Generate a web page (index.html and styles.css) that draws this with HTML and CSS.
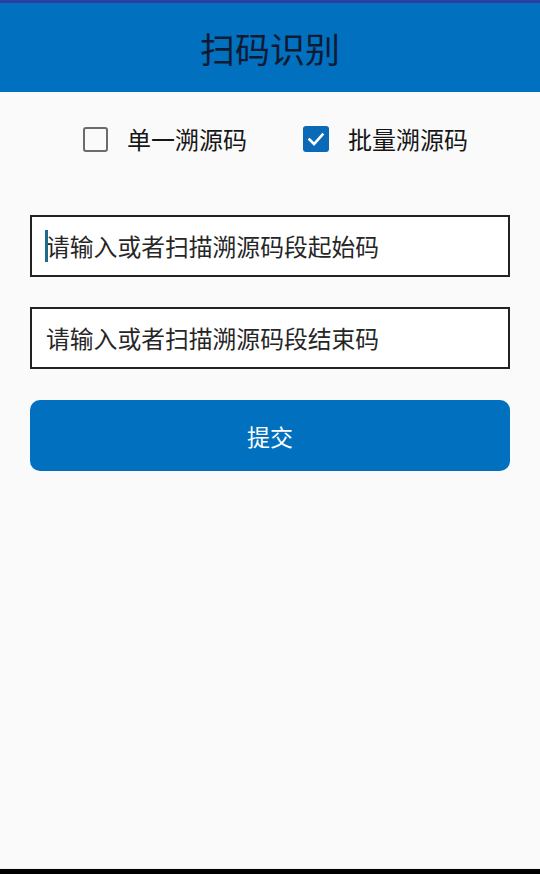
FILE: index.html
```html
<!DOCTYPE html>
<html lang="zh">
<head>
<meta charset="utf-8">
<title>扫码识别</title>
<link rel="stylesheet" href="styles.css">
</head>
<body>
<div class="page">
  <header class="appbar">
    <h1 class="title">扫码识别</h1>
  </header>
  <main class="content">
    <div class="options">
      <label class="option">
        <span class="box"></span>
        <span class="option-text">单一溯源码</span>
      </label>
      <label class="option">
        <span class="box checked">
          <svg viewBox="0 0 26 26" width="26" height="26"><path d="M6.5 13.5 L11 18 L19.5 8.5" fill="none" stroke="#fff" stroke-width="2.6" stroke-linecap="square"/></svg>
        </span>
        <span class="option-text">批量溯源码</span>
      </label>
    </div>
    <div class="field">
      <span class="caret"></span>
      <span class="placeholder">请输入或者扫描溯源码段起始码</span>
    </div>
    <div class="field">
      <span class="placeholder">请输入或者扫描溯源码段结束码</span>
    </div>
    <button class="submit" type="button">提交</button>
  </main>
  <div class="navbar"></div>
</div>
</body>
</html>
```

FILE: styles.css
```css
html, body {
  margin: 0;
  padding: 0;
}
body {
  background: #fafafa;
  font-family: "Noto Sans CJK SC", "Noto Sans", sans-serif;
}
.page {
  height: 874px;
  display: flex;
  flex-direction: column;
}
.appbar {
  border-top: 3px solid #2c3ea2;
  height: 89px;
  background: #0070bf;
  display: flex;
  align-items: center;
  justify-content: center;
}
.title {
  margin: 0;
  font-size: 35px;
  font-weight: 400;
  color: #111a33;
  line-height: 1;
  padding-top: 0;
}
.content {
  flex: 1;
  padding: 0 30px;
}
.options {
  display: flex;
  align-items: center;
  gap: 56px;
  padding-left: 53px;
  height: 94px;
}
.option {
  display: flex;
  align-items: center;
  gap: 19px;
}
.box {
  width: 21px;
  height: 21px;
  border: 2.5px solid #6b6b6b;
  border-radius: 3px;
  display: block;
}
.box.checked {
  width: 26px;
  height: 26px;
  border: none;
  background: #0a6ab8;
}
.box svg {
  display: block;
}
.option-text {
  font-size: 24px;
  color: #161616;
  line-height: 1;
}
.field {
  height: 58px;
  border: 2px solid #222;
  background: #fff;
  display: flex;
  align-items: center;
  padding-left: 14px;
}
.options + .field {
  margin-top: 29px;
}
.field + .field {
  margin-top: 30px;
}
.caret {
  width: 3px;
  height: 32px;
  background: #1d6a8c;
  margin-right: -2px;
  margin-left: -1px;
  position: relative;
  z-index: 1;
}
.placeholder {
  font-size: 23.8px;
  color: #262626;
  line-height: 1;
}
.submit {
  margin-top: 31px;
  width: 100%;
  height: 71px;
  border: none;
  border-radius: 10px;
  background: #0070bf;
  color: #fff;
  font-family: "Noto Sans CJK SC", "Noto Sans", sans-serif;
  font-size: 23px;
  display: block;
}
.navbar {
  height: 5px;
  background: #000;
  border-top: 1px solid #f0f0f0;
}
```
